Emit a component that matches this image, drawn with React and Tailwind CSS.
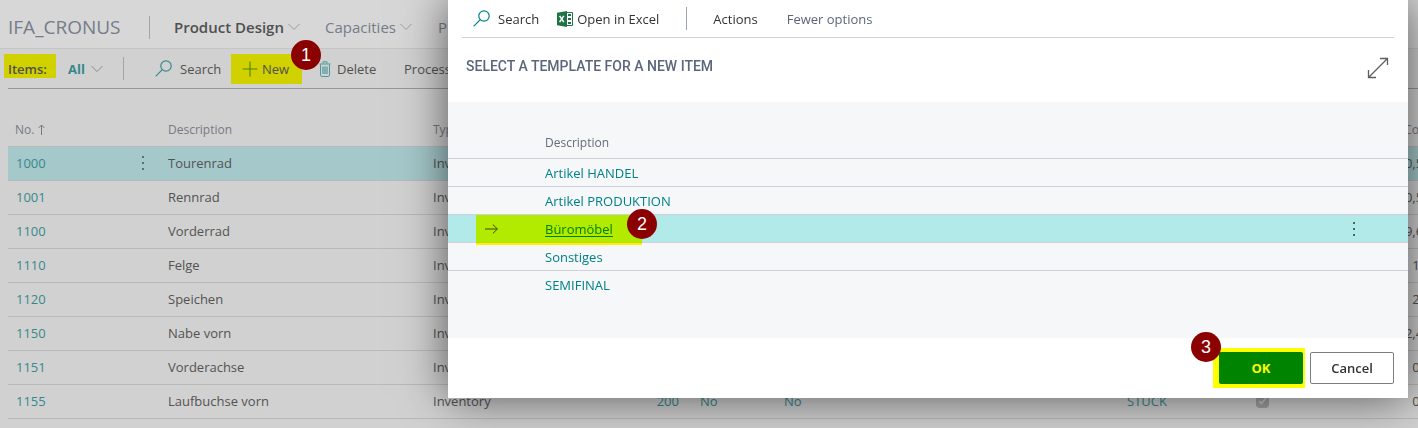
import React from "react";

const ITEMS = [
  { no: "1000", name: "Tourenrad", cost: "350,594" },
  { no: "1001", name: "Rennrad", cost: "350,594" },
  { no: "1100", name: "Vorderrad", cost: "129,671" },
  { no: "1110", name: "Felge", cost: "1,05" },
  { no: "1120", name: "Speichen", cost: "2,00" },
  { no: "1150", name: "Nabe vorn", cost: "12,441" },
  { no: "1151", name: "Vorderachse", cost: "0,45" },
  { no: "1155", name: "Laufbuchse vorn", cost: "0,77" },
];

const TEMPLATES = ["Artikel HANDEL", "Artikel PRODUKTION", "Büromöbel", "Sonstiges", "SEMIFINAL"];

function Chevron() {
  return (
    <svg width="12" height="8" viewBox="0 0 12 8" fill="none" stroke="currentColor" aria-hidden="true">
      <path d="M0.5 1 L6 6.5 L11.5 1" />
    </svg>
  );
}

function SearchIcon() {
  return (
    <svg width="17" height="17" viewBox="0 0 17 17" fill="none" stroke="currentColor" strokeWidth="1.2" aria-hidden="true">
      <circle cx="11" cy="6" r="5.2" />
      <path d="M7.3 9.7 L0.6 16.4" />
    </svg>
  );
}

function PlusIcon() {
  return (
    <svg width="16" height="16" viewBox="0 0 16 16" fill="none" stroke="currentColor" strokeWidth="1.2" aria-hidden="true">
      <path d="M8 0.5 V15.5 M0.5 8 H15.5" />
    </svg>
  );
}

function TrashIcon() {
  return (
    <svg width="12" height="16" viewBox="0 0 12 16" fill="none" stroke="currentColor" aria-hidden="true">
      <path d="M0.5 3 H11.5 M4 2.5 V0.8 H8 V2.5" />
      <path d="M1.5 3.5 V14.2 Q1.5 15.5 2.8 15.5 H9.2 Q10.5 15.5 10.5 14.2 V3.5" />
      <rect x="3" y="5.5" width="6" height="7.5" fill="currentColor" fillOpacity="0.6" stroke="none" />
    </svg>
  );
}

function ExcelIcon() {
  return (
    <svg width="16" height="16" viewBox="0 0 16 16" aria-hidden="true">
      <path d="M9 1.5 H15.5 V14.5 H9 Z" fill="#fff" stroke="#217346" />
      <path d="M11 4 H14 M11 8 H14 M11 12 H14" stroke="#217346" strokeWidth="2" />
      <path d="M0 1.8 L10 0 V16 L0 14.2 Z" fill="#217346" />
      <path d="M2.6 4.8 L6.8 11.2 M6.8 4.8 L2.6 11.2" stroke="#fff" strokeWidth="1.5" />
    </svg>
  );
}

function ExpandIcon() {
  return (
    <svg width="22" height="22" viewBox="0 0 22 22" fill="none" stroke="currentColor" strokeWidth="1.3" aria-hidden="true">
      <path d="M1.5 20.5 L20.5 1.5 M13 1.5 H20.5 V8 M1.5 13 V20.5 H9" />
    </svg>
  );
}

function ArrowIcon() {
  return (
    <svg width="13" height="10" viewBox="0 0 13 10" fill="none" stroke="currentColor" aria-hidden="true">
      <path d="M0 5 H12.4 M7.8 0.5 L12.4 5 L7.8 9.5" />
    </svg>
  );
}

function SortIcon() {
  return (
    <svg width="7" height="11" viewBox="0 0 7 11" fill="none" stroke="currentColor" aria-hidden="true">
      <path d="M3.5 11 V1 M0.6 4 L3.5 1 L6.4 4" />
    </svg>
  );
}

function Dots() {
  return (
    <svg width="2" height="14" viewBox="0 0 2 14" fill="currentColor" aria-hidden="true">
      <path d="M0 0h2v2H0z M0 6h2v2H0z M0 12h2v2H0z" />
    </svg>
  );
}

function Step({ children, className }) {
  return (
    <span
      className={`absolute z-30 flex size-[30px] items-center justify-center rounded-full bg-[#8b0000] font-['Liberation_Sans',sans-serif] text-lg text-white ${className}`}
    >
      {children}
    </span>
  );
}

function ItemTable() {
  return (
    <div className="overflow-hidden pl-2">
      <table className="w-full min-w-[1440px] table-fixed border-collapse">
        <colgroup>
          <col className="w-[116px]" />
          <col className="w-[37px]" />
          <col className="w-[265px]" />
          <col className="w-[154px]" />
          <col className="w-[106px]" />
          <col className="w-[84px]" />
          <col className="w-[350px]" />
          <col className="w-[129px]" />
          <col className="w-[67px]" />
          <col className="w-[132px]" />
        </colgroup>
        <thead>
          <tr className="h-[57px] border-b border-[#b9b9b9] text-left align-bottom text-xs text-[#767a85] [&>th]:px-[7px] [&>th]:pb-2 [&>th]:font-normal">
            <th>
              <span className="flex items-center gap-1">No. <SortIcon /></span>
            </th>
            <th />
            <th>Description</th>
            <th>Type</th>
            <th className="text-right">Inventory</th>
            <th>BOM</th>
            <th>Substitutes</th>
            <th>Base Unit</th>
            <th />
            <th className="text-right"><span className="pr-3">Unit Cost</span></th>
          </tr>
        </thead>
        <tbody>
          {ITEMS.map((item, i) => (
            <tr
              key={item.no}
              className={`h-[34px] border-b border-[#b9b9b9] text-[#535353] [&>td]:px-[7px] ${i === 0 ? "bg-[#a5c8ca]" : ""}`}
            >
              <td><a href="#item" className="pl-px text-[#35898c]">{item.no}</a></td>
              <td>
                {i === 0 && (
                  <button type="button" aria-label="Show more options" className="flex w-full justify-center text-[#5c7072]">
                    <Dots />
                  </button>
                )}
              </td>
              <td>{item.name}</td>
              <td>Inventory</td>
              <td className="text-right text-[#35898c]">200</td>
              <td className="text-[#35898c]"><span className="pl-[7px]">No</span></td>
              <td className="text-[#35898c]"><span className="pl-[7px]">No</span></td>
              <td className="text-[#35898c]">STÜCK</td>
              <td>
                <span className="flex size-[13px] items-center justify-center rounded-sm bg-[#a3a3a3]">
                  <svg width="9" height="8" viewBox="0 0 9 8" fill="none" stroke="#c8c8c8" strokeWidth="1.8" aria-hidden="true">
                    <path d="M1 4 L3.4 6.4 L8 1.2" />
                  </svg>
                </span>
              </td>
              <td className="text-right"><span className="pr-[3px]">{item.cost}</span></td>
            </tr>
          ))}
        </tbody>
      </table>
    </div>
  );
}

function TemplateDialog() {
  return (
    <section
      role="dialog"
      aria-label="Select a template for a new item"
      className="relative w-[960px] bg-white text-[#333] shadow-[0_0_44px_rgba(0,0,0,0.6)]"
    >
      <div className="mx-[14px] flex h-[38px] items-center border-b border-[#cfd1d3] pl-[11px]">
        <button type="button" className="flex items-center gap-2">
          <span className="text-[#008089]"><SearchIcon /></span>Search
        </button>
        <button type="button" className="ml-[18px] flex items-center gap-1">
          <ExcelIcon />Open in Excel
        </button>
        <span className="ml-[27px] h-[23px] w-px bg-[#9aa5b3]" />
        <button type="button" className="ml-[26px]">Actions</button>
        <button type="button" className="ml-[29px] text-[#5c667a]">Fewer options</button>
      </div>

      <div className="flex h-16 items-center justify-between pr-[19px] pb-1 pl-[18px]">
        <h2 className="pb-1 font-[Roboto,sans-serif] text-sm font-medium text-[#5b667c]">
          SELECT A TEMPLATE FOR A NEW ITEM
        </h2>
        <button type="button" aria-label="Expand" className="text-[#5f5f5f]"><ExpandIcon /></button>
      </div>

      <div className="h-[236px] bg-[#f5f7f9]">
        <table className="w-full table-fixed border-collapse">
          <colgroup>
            <col className="w-[97px]" />
            <col />
            <col className="w-[108px]" />
          </colgroup>
          <thead>
            <tr className="h-14 border-b border-[#cfd1d8] text-left align-bottom text-xs text-[#646b7a]">
              <th />
              <th className="pb-[7px] font-normal">Description</th>
              <th />
            </tr>
          </thead>
          <tbody>
            {TEMPLATES.map((name) => {
              const active = name === "Büromöbel";
              return (
                <tr
                  key={name}
                  className={`h-7 border-b border-[#cfd1d8] last:border-b-0 [&>td]:pt-0.5 ${active ? "bg-[#b2eaea]" : ""}`}
                >
                  <td className="relative">
                    {active && (
                      <>
                        <span className="flex pl-[37px] text-[#444]"><ArrowIcon /></span>
                        <span className="absolute top-0 left-7 z-10 h-[30px] w-[166px] bg-[#ffff00] mix-blend-multiply" />
                        <Step className="-top-1.5 left-[179px]">2</Step>
                      </>
                    )}
                  </td>
                  <td>
                    <a href="#template" className={`text-[#008089] ${active ? "underline underline-offset-2" : ""}`}>
                      {name}
                    </a>
                  </td>
                  <td>
                    {active && (
                      <button type="button" aria-label="Show more options" className="flex w-full justify-center text-[#4f6264]">
                        <Dots />
                      </button>
                    )}
                  </td>
                </tr>
              );
            })}
          </tbody>
        </table>
      </div>

      <div className="flex h-[60px] items-center justify-end gap-[5px] pr-[14px]">
        <div className="relative bg-[#ffff00] py-1 pr-0.5 pl-1.5">
          <button type="button" className="block h-8 w-[84px] rounded-xs bg-[#008400] font-bold text-[#ffff00]">OK</button>
          <Step className="-top-4 -left-[22px]">3</Step>
        </div>
        <button type="button" className="h-8 w-[84px] rounded-xs border border-[#7d7d7d] font-semibold">Cancel</button>
      </div>
    </section>
  );
}

export default function App() {
  return (
    <div className="relative min-h-screen overflow-hidden bg-[#d1d1d1] font-['Open_Sans',sans-serif] text-[13px] leading-5 text-[#505050]">
      <header className="flex h-[49px] items-center border-b border-[#c5c5c5] bg-[#d7d7d7] pt-1.5 pl-2 text-[#767c8a]">
        <h1 className="w-[141px] text-[19px] font-normal">IFA_CRONUS</h1>
        <span className="h-[23px] w-px bg-[#a2a4a8]" />
        <nav className="flex pl-6 text-[15px]">
          <a href="#design" className="flex w-[151px] items-center gap-1 font-semibold text-[#505050]">
            Product Design<span className="text-[#9b9b9b]"><Chevron /></span>
          </a>
          <a href="#capacities" className="flex w-[113px] items-center gap-1">
            Capacities<span className="text-[#9b9b9b]"><Chevron /></span>
          </a>
          <a href="#planning">Planning</a>
        </nav>
      </header>

      <div className="ml-1 flex h-[39px] items-center">
        <h2 className="-mt-1.5 flex h-6 w-[52px] items-center bg-[#d1d100] pt-1.5 pl-1 font-semibold">Items:</h2>
        <button type="button" className="flex w-[67px] items-center gap-1.5 pl-3 font-bold text-[#35898c]">
          All<span className="text-[#8a8a8a]"><Chevron /></span>
        </button>
        <span className="h-[23px] w-px bg-[#a2a4a8]" />
        <button type="button" className="flex w-[107px] items-center gap-2 pl-[31px]">
          <span className="text-[#35898c]"><SearchIcon /></span>Search
        </button>
        <div className="relative">
          <button type="button" className="flex h-[30px] w-[71px] items-center gap-1 bg-[#d1d100] pl-[11px]">
            <span className="text-[#4f8a00]"><PlusIcon /></span>New
          </button>
          <Step className="-top-3.5 left-[60px]">1</Step>
        </div>
        <button type="button" className="flex w-[102px] items-center gap-1.5 pl-[17px]">
          <span className="text-[#4d9a9d]"><TrashIcon /></span>Delete
        </button>
        <button type="button">Process</button>
      </div>
      <div className="ml-2 h-px bg-[#94969b]" />

      <ItemTable />

      <div className="absolute inset-0 z-20 flex items-start justify-end pr-2.5">
        <TemplateDialog />
      </div>
    </div>
  );
}
